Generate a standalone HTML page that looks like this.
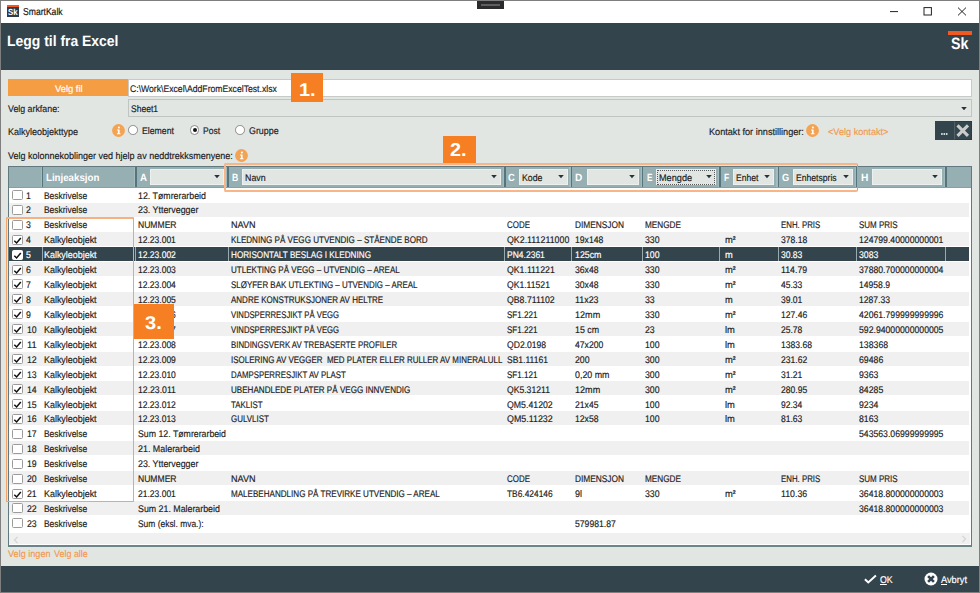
<!DOCTYPE html>
<html><head><meta charset="utf-8"><title>SmartKalk</title>
<style>
*{box-sizing:border-box;margin:0;padding:0}
html,body{width:980px;height:593px;overflow:hidden;background:#e1e6e3}
body{font-family:"Liberation Sans",sans-serif;font-size:9.6px;color:#1c1c1c;position:relative}
.b{position:absolute;display:block}
.t{text-rendering:geometricPrecision;-webkit-text-stroke:0.17px currentColor;position:absolute;display:block;white-space:pre;line-height:12px;transform-origin:0 50%}
.t sup{font-size:0.55em;vertical-align:baseline;position:relative;top:-0.62em;line-height:0;font-weight:bold}
#win{position:absolute;left:0;top:0;width:980px;height:593px;border:1px solid #7f7f7f}
.radio{position:absolute;width:9.6px;height:9.6px;border-radius:50%;border:1.1px solid #8a8a8a;background:#fff}
.radio.on::after{content:"";position:absolute;left:1.7px;top:1.8px;width:4px;height:4px;border-radius:50%;background:#151515}

</style></head>
<body>
<div class="b" style="left:1px;top:1px;width:978px;height:22.4px;background:#fff;"></div>
<div class="b" style="left:7px;top:5px;width:12px;height:12px;background:#2e3a50;border-top:2px solid #f05a22"></div>
<span class="t" style="left:8.10px;top:6.00px;font-size:8.8px;transform:scaleX(0.8917);font-weight:bold;-webkit-text-stroke:0;color:#fff;">Sk</span>
<span class="t" style="left:22.60px;top:7.00px;font-size:10.0px;transform:scaleX(0.8585);color:#111;">SmartKalk</span>
<div class="b" style="left:477px;top:1px;width:26.5px;height:8px;background:#2b2b2d;"></div>
<div class="b" style="left:481px;top:3.5px;width:18.5px;height:2.6px;background:#5e5e60;"></div>
<svg class="b" style="left:886px;top:3px" width="86" height="18" viewBox="0 0 86 18"><path d="M4 8.6H12" stroke="#222" stroke-width="1" fill="none"/><rect x="38" y="4.6" width="7.4" height="7.4" stroke="#222" stroke-width="1" fill="none"/><path d="M72 4.6L80 12.4M80 4.6L72 12.4" stroke="#222" stroke-width="1" fill="none"/></svg>
<div class="b" style="left:1px;top:23.4px;width:978px;height:47px;background:#33444d;"></div>
<span class="t" style="left:6.80px;top:36.00px;font-size:15px;transform:scaleX(0.9288);font-weight:bold;-webkit-text-stroke:0;color:#fff;">Legg til fra Excel</span>
<div class="b" style="left:947.5px;top:30.6px;width:24px;height:4.2px;background:#f05a22;"></div>
<span class="t" style="left:951.00px;top:38.00px;font-size:16.4px;transform:scaleX(0.8673);font-weight:bold;-webkit-text-stroke:0;color:#fff;">Sk</span>
<div class="b" style="left:8px;top:79.2px;width:120.2px;height:17.3px;background:#f59d42;"></div>
<span class="t" style="left:54.50px;top:84.00px;font-size:9.6px;transform:scaleX(0.9765);color:#fff;">Velg fil</span>
<div class="b" style="left:128.2px;top:79.2px;width:843.4px;height:17.7px;background:#fff;border:0.9px solid #c6cbc9"></div>
<span class="t" style="left:129.90px;top:84.00px;font-size:9.6px;transform:scaleX(0.9009);">C:\Work\Excel\AddFromExcelTest.xlsx</span>
<span class="t" style="left:8.00px;top:104.00px;font-size:9.6px;transform:scaleX(0.9193);">Velg arkfane:</span>
<div class="b" style="left:128.2px;top:99.3px;width:843.4px;height:18.1px;background:#e1e6e3;border:1px solid #bfc5c3"></div>
<span class="t" style="left:131.40px;top:104.00px;font-size:9.6px;transform:scaleX(0.8914);">Sheet1</span>
<svg class="b" style="left:961.3px;top:106.7px" width="6" height="3.4" viewBox="0 0 6 3.4"><path d="M0.2 0.1H5.8L3 3.3Z" fill="#25333b"/></svg>
<div class="b" style="left:290.7px;top:73.4px;width:32.5px;height:28.6px;background:#f57f22;"></div>
<span class="t" style="left:298.60px;top:84.00px;font-size:18.6px;transform:scaleX(1.0699);font-weight:bold;-webkit-text-stroke:0;color:#fff;">1.</span>
<span class="t" style="left:8.00px;top:127.00px;font-size:9.6px;transform:scaleX(0.9371);">Kalkyleobjekttype</span>
<div class="b" style="left:112.1px;top:124.0px;width:13px;height:13px"><svg viewBox="0 0 13 13"><circle cx="6.5" cy="6.5" r="6.4" fill="#f2a354"/><circle cx="6.9" cy="3.5" r="1.05" fill="#fff"/><path d="M5.1 5.6H7.6V9.3H8.5V10.3H4.9V9.3H5.9V6.5H5.1Z" fill="#fff"/></svg></div>
<div class="radio" style="left:128.35px;top:125.10000000000001px"></div>
<span class="t" style="left:142.30px;top:126.00px;font-size:9.6px;transform:scaleX(0.9080);">Element</span>
<div class="radio on" style="left:189.89999999999998px;top:125.10000000000001px"></div>
<span class="t" style="left:203.40px;top:126.00px;font-size:9.6px;transform:scaleX(0.8916);">Post</span>
<div class="radio" style="left:235.2px;top:125.10000000000001px"></div>
<span class="t" style="left:249.00px;top:126.00px;font-size:9.6px;transform:scaleX(0.9253);">Gruppe</span>
<span class="t" style="left:708.80px;top:127.00px;font-size:9.6px;transform:scaleX(0.9518);">Kontakt for innstillinger:</span>
<div class="b" style="left:806.3px;top:124.1px;width:13px;height:13px"><svg viewBox="0 0 13 13"><circle cx="6.5" cy="6.5" r="6.4" fill="#f2a354"/><circle cx="6.9" cy="3.5" r="1.05" fill="#fff"/><path d="M5.1 5.6H7.6V9.3H8.5V10.3H4.9V9.3H5.9V6.5H5.1Z" fill="#fff"/></svg></div>
<span class="t" style="left:827.90px;top:127.00px;font-size:9.6px;transform:scaleX(0.9514);color:#f39a4d;">&lt;Velg kontakt&gt;</span>
<div class="b" style="left:935.4px;top:121.3px;width:18.6px;height:18.3px;background:#33444d;"></div>
<svg class="b" style="left:940px;top:132px" width="9" height="4" viewBox="0 0 9 4"><path d="M1.1 1.1h1.6v1.8h-1.6zM3.5 1.1h1.6v1.8h-1.6zM5.9 1.1h1.6v1.8h-1.6z" fill="#c9d8d8"/></svg>
<div class="b" style="left:953.7px;top:121.3px;width:18.0px;height:18.3px;background:#34464e;border:1px solid #2c3b43;border-left-color:#4f6068"></div>
<svg class="b" style="left:955px;top:123px" width="16" height="16" viewBox="0 0 16 16"><path d="M2.5 2.4L13.0 12.9M13.0 2.4L2.5 12.9" stroke="#cbcbcb" stroke-width="3.1" fill="none"/></svg>
<span class="t" style="left:8.00px;top:151.00px;font-size:9.6px;transform:scaleX(0.9383);">Velg kolonnekoblinger ved hjelp av neddtrekksmenyene:</span>
<div class="b" style="left:234.8px;top:148.9px;width:13px;height:13px"><svg viewBox="0 0 13 13"><circle cx="6.5" cy="6.5" r="6.4" fill="#f2a354"/><circle cx="6.9" cy="3.5" r="1.05" fill="#fff"/><path d="M5.1 5.6H7.6V9.3H8.5V10.3H4.9V9.3H5.9V6.5H5.1Z" fill="#fff"/></svg></div>
<div class="b" style="left:442.5px;top:136px;width:33px;height:28px;background:#f57f22;"></div>
<span class="t" style="left:450.00px;top:144.00px;font-size:18.6px;transform:scaleX(1.0699);font-weight:bold;-webkit-text-stroke:0;color:#fff;">2.</span>
<div class="b" style="left:7.7px;top:165.7px;width:964.4px;height:381.3px;background:#fff;border:1.3px solid #61797f;border-bottom:2px solid #6d8489"></div>
<div class="b" style="left:9px;top:167px;width:961.5px;height:20.7px;background:#95afb3;border-bottom:1px solid #86a0a4"></div>
<div class="b" style="left:40.7px;top:167px;width:1.3px;height:19.6px;background:#a3bbbe;"></div>
<div class="b" style="left:42.0px;top:167px;width:1.4px;height:19.6px;background:#56747b;"></div>
<div class="b" style="left:134.0px;top:167px;width:1.3px;height:19.6px;background:#a3bbbe;"></div>
<div class="b" style="left:135.3px;top:167px;width:1.4px;height:19.6px;background:#56747b;"></div>
<div class="b" style="left:226.15px;top:167px;width:1.3px;height:19.6px;background:#a3bbbe;"></div>
<div class="b" style="left:227.45000000000002px;top:167px;width:1.4px;height:19.6px;background:#56747b;"></div>
<div class="b" style="left:502.95px;top:167px;width:1.3px;height:19.6px;background:#a3bbbe;"></div>
<div class="b" style="left:504.25px;top:167px;width:1.4px;height:19.6px;background:#56747b;"></div>
<div class="b" style="left:569.4px;top:167px;width:1.3px;height:19.6px;background:#a3bbbe;"></div>
<div class="b" style="left:570.6999999999999px;top:167px;width:1.4px;height:19.6px;background:#56747b;"></div>
<div class="b" style="left:640.55px;top:167px;width:1.3px;height:19.6px;background:#a3bbbe;"></div>
<div class="b" style="left:641.8499999999999px;top:167px;width:1.4px;height:19.6px;background:#56747b;"></div>
<div class="b" style="left:717.9px;top:167px;width:1.3px;height:19.6px;background:#a3bbbe;"></div>
<div class="b" style="left:719.1999999999999px;top:167px;width:1.4px;height:19.6px;background:#56747b;"></div>
<div class="b" style="left:776.4px;top:167px;width:1.3px;height:19.6px;background:#a3bbbe;"></div>
<div class="b" style="left:777.6999999999999px;top:167px;width:1.4px;height:19.6px;background:#56747b;"></div>
<div class="b" style="left:854.5px;top:167px;width:1.3px;height:19.6px;background:#a3bbbe;"></div>
<div class="b" style="left:855.8px;top:167px;width:1.4px;height:19.6px;background:#56747b;"></div>
<div class="b" style="left:944.0px;top:167px;width:1.3px;height:19.6px;background:#a3bbbe;"></div>
<div class="b" style="left:945.3px;top:167px;width:1.4px;height:19.6px;background:#56747b;"></div>
<span class="t" style="left:45.60px;top:173.00px;font-size:10.4px;transform:scaleX(0.9323);font-weight:bold;-webkit-text-stroke:0;color:#fff;">Linjeaksjon</span>
<span class="t" style="left:139.50px;top:173.00px;font-size:10.4px;transform:scaleX(0.9314);font-weight:bold;-webkit-text-stroke:0;color:#fff;">A</span>
<div class="b" style="left:150px;top:168.6px;width:73.8px;height:16.9px;background:#e1e6e3;border:1px solid #ecf0ee"></div>
<svg class="b" style="left:214.1px;top:175.45000000000002px" width="6" height="3.4" viewBox="0 0 6 3.4"><path d="M0.2 0.1H5.8L3 3.3Z" fill="#25333b"/></svg>
<span class="t" style="left:231.85px;top:173.00px;font-size:10.4px;transform:scaleX(0.8383);font-weight:bold;-webkit-text-stroke:0;color:#fff;">B</span>
<div class="b" style="left:242.4px;top:168.6px;width:258.7px;height:16.9px;background:#e1e6e3;border:1px solid #ecf0ee"></div>
<span class="t" style="left:245.30px;top:173.00px;font-size:9.6px;transform:scaleX(0.9206);">Navn</span>
<svg class="b" style="left:491.1px;top:175.45000000000002px" width="6" height="3.4" viewBox="0 0 6 3.4"><path d="M0.2 0.1H5.8L3 3.3Z" fill="#25333b"/></svg>
<span class="t" style="left:508.05px;top:173.00px;font-size:10.4px;transform:scaleX(0.8915);font-weight:bold;-webkit-text-stroke:0;color:#fff;">C</span>
<div class="b" style="left:519.1px;top:168.6px;width:48.6px;height:16.9px;background:#e1e6e3;border:1px solid #ecf0ee"></div>
<span class="t" style="left:522.00px;top:173.00px;font-size:9.6px;transform:scaleX(0.9118);">Kode</span>
<svg class="b" style="left:557.6px;top:175.45000000000002px" width="6" height="3.4" viewBox="0 0 6 3.4"><path d="M0.2 0.1H5.8L3 3.3Z" fill="#25333b"/></svg>
<span class="t" style="left:575.25px;top:173.00px;font-size:10.4px;transform:scaleX(0.9713);font-weight:bold;-webkit-text-stroke:0;color:#fff;">D</span>
<div class="b" style="left:586.7px;top:168.6px;width:52.2px;height:16.9px;background:#e1e6e3;border:1px solid #ecf0ee"></div>
<svg class="b" style="left:628.8px;top:175.45000000000002px" width="6" height="3.4" viewBox="0 0 6 3.4"><path d="M0.2 0.1H5.8L3 3.3Z" fill="#25333b"/></svg>
<span class="t" style="left:646.65px;top:173.00px;font-size:10.4px;transform:scaleX(0.7928);font-weight:bold;-webkit-text-stroke:0;color:#fff;">E</span>
<div class="b" style="left:656.2px;top:168.6px;width:59.7px;height:16.9px;background:#e1e6e3;border:1px solid #ecf0ee"></div>
<div class="b" style="left:657.4000000000001px;top:170.0px;width:57.3px;height:14.6px;border:1px dotted #5a5a5a"></div>
<span class="t" style="left:659.10px;top:173.00px;font-size:9.6px;transform:scaleX(0.9536);">Mengde</span>
<svg class="b" style="left:706.0px;top:175.45000000000002px" width="6" height="3.4" viewBox="0 0 6 3.4"><path d="M0.2 0.1H5.8L3 3.3Z" fill="#25333b"/></svg>
<span class="t" style="left:723.55px;top:173.00px;font-size:10.4px;transform:scaleX(0.8177);font-weight:bold;-webkit-text-stroke:0;color:#fff;">F</span>
<div class="b" style="left:732.9px;top:168.6px;width:41.5px;height:16.9px;background:#e1e6e3;border:1px solid #ecf0ee"></div>
<span class="t" style="left:735.80px;top:173.00px;font-size:9.6px;transform:scaleX(0.8941);">Enhet</span>
<svg class="b" style="left:764.3px;top:175.45000000000002px" width="6" height="3.4" viewBox="0 0 6 3.4"><path d="M0.2 0.1H5.8L3 3.3Z" fill="#25333b"/></svg>
<span class="t" style="left:781.50px;top:173.00px;font-size:10.4px;transform:scaleX(0.8896);font-weight:bold;-webkit-text-stroke:0;color:#fff;">G</span>
<div class="b" style="left:793.4px;top:168.6px;width:59.6px;height:16.9px;background:#e1e6e3;border:1px solid #ecf0ee"></div>
<span class="t" style="left:796.30px;top:173.00px;font-size:9.6px;transform:scaleX(0.8970);">Enhetspris</span>
<svg class="b" style="left:843.0px;top:175.45000000000002px" width="6" height="3.4" viewBox="0 0 6 3.4"><path d="M0.2 0.1H5.8L3 3.3Z" fill="#25333b"/></svg>
<span class="t" style="left:860.55px;top:173.00px;font-size:10.4px;transform:scaleX(0.9846);font-weight:bold;-webkit-text-stroke:0;color:#fff;">H</span>
<div class="b" style="left:872.1px;top:168.6px;width:70.1px;height:16.9px;background:#e1e6e3;border:1px solid #ecf0ee"></div>
<svg class="b" style="left:932.05px;top:175.45000000000002px" width="6" height="3.4" viewBox="0 0 6 3.4"><path d="M0.2 0.1H5.8L3 3.3Z" fill="#25333b"/></svg>
<div class="b" style="left:12.0px;top:189.9px;width:10.7px;height:10.0px;background:#fff;border:1px solid #9b9b9b;border-radius:1.5px"></div>
<span class="t" style="left:25.70px;top:191.00px;font-size:9.6px;transform:scaleX(0.9079);">1</span>
<span class="t" style="left:44.00px;top:191.00px;font-size:9.6px;transform:scaleX(0.8790);">Beskrivelse</span>
<span class="t" style="left:138.30px;top:191.00px;font-size:9.6px;transform:scaleX(0.9188);">12. Tømrerarbeid</span>
<div class="b" style="left:9px;top:202.56px;width:960px;height:14.0px;background:#f0f0f0;"></div>
<div class="b" style="left:12.0px;top:204.83px;width:10.7px;height:10.0px;background:#fff;border:1px solid #9b9b9b;border-radius:1.5px"></div>
<span class="t" style="left:25.70px;top:205.00px;font-size:9.6px;transform:scaleX(0.9079);">2</span>
<span class="t" style="left:44.00px;top:205.00px;font-size:9.6px;transform:scaleX(0.8790);">Beskrivelse</span>
<span class="t" style="left:138.30px;top:205.00px;font-size:9.6px;transform:scaleX(0.9231);">23. Yttervegger</span>
<div class="b" style="left:12.0px;top:219.76px;width:10.7px;height:10.0px;background:#fff;border:1px solid #9b9b9b;border-radius:1.5px"></div>
<span class="t" style="left:25.70px;top:220.00px;font-size:9.6px;transform:scaleX(0.9079);">3</span>
<span class="t" style="left:44.00px;top:220.00px;font-size:9.6px;transform:scaleX(0.8790);">Beskrivelse</span>
<span class="t" style="left:138.30px;top:220.00px;font-size:9.6px;transform:scaleX(0.8930);">NUMMER</span>
<span class="t" style="left:230.60px;top:220.00px;font-size:9.6px;transform:scaleX(0.9467);">NAVN</span>
<span class="t" style="left:507.30px;top:220.00px;font-size:9.6px;transform:scaleX(0.8277);">CODE</span>
<span class="t" style="left:574.50px;top:220.00px;font-size:9.6px;transform:scaleX(0.8670);">DIMENSJON</span>
<span class="t" style="left:645.40px;top:220.00px;font-size:9.6px;transform:scaleX(0.8543);">MENGDE</span>
<span class="t" style="left:781.20px;top:220.00px;font-size:9.6px;transform:scaleX(0.8184);">ENH. PRIS</span>
<span class="t" style="left:859.40px;top:220.00px;font-size:9.6px;transform:scaleX(0.8335);">SUM PRIS</span>
<div class="b" style="left:9px;top:232.38px;width:960px;height:14.0px;background:#f0f0f0;"></div>
<div class="b" style="left:12.0px;top:234.69px;width:10.7px;height:10.0px;background:#fff;border:1px solid #9b9b9b;border-radius:1.5px"><svg style="position:absolute;left:-1px;top:-1px" width="11" height="11" viewBox="0 0 11 11"><path d="M2.3 5.7L4.6 8L8.8 2.9" fill="none" stroke="#111" stroke-width="1.5"/></svg></div>
<span class="t" style="left:25.70px;top:235.00px;font-size:9.6px;transform:scaleX(0.9079);">4</span>
<span class="t" style="left:44.00px;top:235.00px;font-size:9.6px;transform:scaleX(0.9303);">Kalkyleobjekt</span>
<span class="t" style="left:138.30px;top:235.00px;font-size:9.6px;transform:scaleX(0.8870);">12.23.001</span>
<span class="t" style="left:230.60px;top:235.00px;font-size:9.6px;transform:scaleX(0.8421);">KLEDNING PÅ VEGG UTVENDIG – STÅENDE BORD</span>
<span class="t" style="left:507.30px;top:235.00px;font-size:9.6px;transform:scaleX(0.9200);">QK2.111211000</span>
<span class="t" style="left:574.50px;top:235.00px;font-size:9.6px;transform:scaleX(0.9017);">19x148</span>
<span class="t" style="left:645.40px;top:235.00px;font-size:9.6px;transform:scaleX(0.9088);">330</span>
<span class="t" style="left:724.60px;top:235.00px;font-size:9.6px;transform:scaleX(0.9781);">m<sup>2</sup></span>
<span class="t" style="left:781.20px;top:235.00px;font-size:9.6px;transform:scaleX(0.8932);">378.18</span>
<span class="t" style="left:859.40px;top:235.00px;font-size:9.6px;transform:scaleX(0.9042);">124799.40000000001</span>
<div class="b" style="left:9px;top:247.44000000000003px;width:960px;height:13.35px;background:#33444d;"></div>
<div class="b" style="left:42.1px;top:247.44000000000003px;width:1.1px;height:13.35px;background:#9aabaf;"></div>
<div class="b" style="left:135.4px;top:247.44000000000003px;width:1.1px;height:13.35px;background:#9aabaf;"></div>
<div class="b" style="left:227.55px;top:247.44000000000003px;width:1.1px;height:13.35px;background:#9aabaf;"></div>
<div class="b" style="left:504.34999999999997px;top:247.44000000000003px;width:1.1px;height:13.35px;background:#9aabaf;"></div>
<div class="b" style="left:570.8px;top:247.44000000000003px;width:1.1px;height:13.35px;background:#9aabaf;"></div>
<div class="b" style="left:641.9499999999999px;top:247.44000000000003px;width:1.1px;height:13.35px;background:#9aabaf;"></div>
<div class="b" style="left:719.3px;top:247.44000000000003px;width:1.1px;height:13.35px;background:#9aabaf;"></div>
<div class="b" style="left:777.8px;top:247.44000000000003px;width:1.1px;height:13.35px;background:#9aabaf;"></div>
<div class="b" style="left:855.9px;top:247.44000000000003px;width:1.1px;height:13.35px;background:#9aabaf;"></div>
<div class="b" style="left:945.4px;top:247.44000000000003px;width:1.1px;height:13.35px;background:#9aabaf;"></div>
<div class="b" style="left:12.0px;top:249.62px;width:10.7px;height:10.0px;background:#fff;border:1px solid #fff;border-radius:1.5px"><svg style="position:absolute;left:-1px;top:-1px" width="11" height="11" viewBox="0 0 11 11"><path d="M2.3 5.7L4.6 8L8.8 2.9" fill="none" stroke="#111" stroke-width="1.5"/></svg></div>
<span class="t" style="left:25.70px;top:250.00px;font-size:9.6px;transform:scaleX(0.9079);color:#fff;">5</span>
<span class="t" style="left:44.00px;top:250.00px;font-size:9.6px;transform:scaleX(0.9303);color:#fff;">Kalkyleobjekt</span>
<span class="t" style="left:138.30px;top:250.00px;font-size:9.6px;transform:scaleX(0.8870);color:#fff;">12.23.002</span>
<span class="t" style="left:230.60px;top:250.00px;font-size:9.6px;transform:scaleX(0.8498);color:#fff;">HORISONTALT BESLAG I KLEDNING</span>
<span class="t" style="left:507.30px;top:250.00px;font-size:9.6px;transform:scaleX(0.8868);color:#fff;">PN4.2361</span>
<span class="t" style="left:574.50px;top:250.00px;font-size:9.6px;transform:scaleX(0.9185);color:#fff;">125cm</span>
<span class="t" style="left:645.40px;top:250.00px;font-size:9.6px;transform:scaleX(0.9088);color:#fff;">100</span>
<span class="t" style="left:724.60px;top:250.00px;font-size:9.6px;transform:scaleX(0.9673);color:#fff;">m</span>
<span class="t" style="left:781.20px;top:250.00px;font-size:9.6px;transform:scaleX(0.8893);color:#fff;">30.83</span>
<span class="t" style="left:859.40px;top:250.00px;font-size:9.6px;transform:scaleX(0.9092);color:#fff;">3083</span>
<div class="b" style="left:9px;top:262.2px;width:960px;height:14.0px;background:#f0f0f0;"></div>
<div class="b" style="left:12.0px;top:264.55px;width:10.7px;height:10.0px;background:#fff;border:1px solid #9b9b9b;border-radius:1.5px"><svg style="position:absolute;left:-1px;top:-1px" width="11" height="11" viewBox="0 0 11 11"><path d="M2.3 5.7L4.6 8L8.8 2.9" fill="none" stroke="#111" stroke-width="1.5"/></svg></div>
<span class="t" style="left:25.70px;top:265.00px;font-size:9.6px;transform:scaleX(0.9079);">6</span>
<span class="t" style="left:44.00px;top:265.00px;font-size:9.6px;transform:scaleX(0.9303);">Kalkyleobjekt</span>
<span class="t" style="left:138.30px;top:265.00px;font-size:9.6px;transform:scaleX(0.8870);">12.23.003</span>
<span class="t" style="left:230.60px;top:265.00px;font-size:9.6px;transform:scaleX(0.8376);">UTLEKTING PÅ VEGG – UTVENDIG – AREAL</span>
<span class="t" style="left:507.30px;top:265.00px;font-size:9.6px;transform:scaleX(0.9108);">QK1.111221</span>
<span class="t" style="left:574.50px;top:265.00px;font-size:9.6px;transform:scaleX(0.9004);">36x48</span>
<span class="t" style="left:645.40px;top:265.00px;font-size:9.6px;transform:scaleX(0.9088);">330</span>
<span class="t" style="left:724.60px;top:265.00px;font-size:9.6px;transform:scaleX(0.9781);">m<sup>2</sup></span>
<span class="t" style="left:781.20px;top:265.00px;font-size:9.6px;transform:scaleX(0.9151);">114.79</span>
<span class="t" style="left:859.40px;top:265.00px;font-size:9.6px;transform:scaleX(0.9042);">37880.700000000004</span>
<div class="b" style="left:12.0px;top:279.48px;width:10.7px;height:10.0px;background:#fff;border:1px solid #9b9b9b;border-radius:1.5px"><svg style="position:absolute;left:-1px;top:-1px" width="11" height="11" viewBox="0 0 11 11"><path d="M2.3 5.7L4.6 8L8.8 2.9" fill="none" stroke="#111" stroke-width="1.5"/></svg></div>
<span class="t" style="left:25.70px;top:280.00px;font-size:9.6px;transform:scaleX(0.9079);">7</span>
<span class="t" style="left:44.00px;top:280.00px;font-size:9.6px;transform:scaleX(0.9303);">Kalkyleobjekt</span>
<span class="t" style="left:138.30px;top:280.00px;font-size:9.6px;transform:scaleX(0.8870);">12.23.004</span>
<span class="t" style="left:230.60px;top:280.00px;font-size:9.6px;transform:scaleX(0.8290);">SLØYFER BAK UTLEKTING – UTVENDIG – AREAL</span>
<span class="t" style="left:507.30px;top:280.00px;font-size:9.6px;transform:scaleX(0.8974);">QK1.11521</span>
<span class="t" style="left:574.50px;top:280.00px;font-size:9.6px;transform:scaleX(0.9004);">30x48</span>
<span class="t" style="left:645.40px;top:280.00px;font-size:9.6px;transform:scaleX(0.9088);">330</span>
<span class="t" style="left:724.60px;top:280.00px;font-size:9.6px;transform:scaleX(0.9781);">m<sup>2</sup></span>
<span class="t" style="left:781.20px;top:280.00px;font-size:9.6px;transform:scaleX(0.8893);">45.33</span>
<span class="t" style="left:859.40px;top:280.00px;font-size:9.6px;transform:scaleX(0.8954);">14958.9</span>
<div class="b" style="left:9px;top:292.02px;width:960px;height:14.0px;background:#f0f0f0;"></div>
<div class="b" style="left:12.0px;top:294.40999999999997px;width:10.7px;height:10.0px;background:#fff;border:1px solid #9b9b9b;border-radius:1.5px"><svg style="position:absolute;left:-1px;top:-1px" width="11" height="11" viewBox="0 0 11 11"><path d="M2.3 5.7L4.6 8L8.8 2.9" fill="none" stroke="#111" stroke-width="1.5"/></svg></div>
<span class="t" style="left:25.70px;top:295.00px;font-size:9.6px;transform:scaleX(0.9079);">8</span>
<span class="t" style="left:44.00px;top:295.00px;font-size:9.6px;transform:scaleX(0.9303);">Kalkyleobjekt</span>
<span class="t" style="left:138.30px;top:295.00px;font-size:9.6px;transform:scaleX(0.8870);">12.23.005</span>
<span class="t" style="left:230.60px;top:295.00px;font-size:9.6px;transform:scaleX(0.8336);">ANDRE KONSTRUKSJONER AV HELTRE</span>
<span class="t" style="left:507.30px;top:295.00px;font-size:9.6px;transform:scaleX(0.9096);">QB8.711102</span>
<span class="t" style="left:574.50px;top:295.00px;font-size:9.6px;transform:scaleX(0.9253);">11x23</span>
<span class="t" style="left:645.40px;top:295.00px;font-size:9.6px;transform:scaleX(0.9092);">33</span>
<span class="t" style="left:724.60px;top:295.00px;font-size:9.6px;transform:scaleX(0.9673);">m</span>
<span class="t" style="left:781.20px;top:295.00px;font-size:9.6px;transform:scaleX(0.8893);">39.01</span>
<span class="t" style="left:859.40px;top:295.00px;font-size:9.6px;transform:scaleX(0.8954);">1287.33</span>
<div class="b" style="left:12.0px;top:309.34000000000003px;width:10.7px;height:10.0px;background:#fff;border:1px solid #9b9b9b;border-radius:1.5px"><svg style="position:absolute;left:-1px;top:-1px" width="11" height="11" viewBox="0 0 11 11"><path d="M2.3 5.7L4.6 8L8.8 2.9" fill="none" stroke="#111" stroke-width="1.5"/></svg></div>
<span class="t" style="left:25.70px;top:310.00px;font-size:9.6px;transform:scaleX(0.9079);">9</span>
<span class="t" style="left:44.00px;top:310.00px;font-size:9.6px;transform:scaleX(0.9303);">Kalkyleobjekt</span>
<span class="t" style="left:138.30px;top:310.00px;font-size:9.6px;transform:scaleX(0.8870);">12.23.006</span>
<span class="t" style="left:230.60px;top:310.00px;font-size:9.6px;transform:scaleX(0.8057);">VINDSPERRESJIKT PÅ VEGG</span>
<span class="t" style="left:507.30px;top:310.00px;font-size:9.6px;transform:scaleX(0.8384);">SF1.221</span>
<span class="t" style="left:574.50px;top:310.00px;font-size:9.6px;transform:scaleX(0.9446);">12mm</span>
<span class="t" style="left:645.40px;top:310.00px;font-size:9.6px;transform:scaleX(0.9088);">330</span>
<span class="t" style="left:724.60px;top:310.00px;font-size:9.6px;transform:scaleX(0.9781);">m<sup>2</sup></span>
<span class="t" style="left:781.20px;top:310.00px;font-size:9.6px;transform:scaleX(0.8932);">127.46</span>
<span class="t" style="left:859.40px;top:310.00px;font-size:9.6px;transform:scaleX(0.9042);">42061.799999999996</span>
<div class="b" style="left:9px;top:321.84000000000003px;width:960px;height:14.0px;background:#f0f0f0;"></div>
<div class="b" style="left:12.0px;top:324.27px;width:10.7px;height:10.0px;background:#fff;border:1px solid #9b9b9b;border-radius:1.5px"><svg style="position:absolute;left:-1px;top:-1px" width="11" height="11" viewBox="0 0 11 11"><path d="M2.3 5.7L4.6 8L8.8 2.9" fill="none" stroke="#111" stroke-width="1.5"/></svg></div>
<span class="t" style="left:26.60px;top:325.00px;font-size:9.6px;transform:scaleX(0.9092);">10</span>
<span class="t" style="left:44.00px;top:325.00px;font-size:9.6px;transform:scaleX(0.9303);">Kalkyleobjekt</span>
<span class="t" style="left:138.30px;top:325.00px;font-size:9.6px;transform:scaleX(0.8870);">12.23.007</span>
<span class="t" style="left:230.60px;top:325.00px;font-size:9.6px;transform:scaleX(0.8057);">VINDSPERRESJIKT PÅ VEGG</span>
<span class="t" style="left:507.30px;top:325.00px;font-size:9.6px;transform:scaleX(0.8384);">SF1.221</span>
<span class="t" style="left:574.50px;top:325.00px;font-size:9.6px;transform:scaleX(0.9206);">15 cm</span>
<span class="t" style="left:645.40px;top:325.00px;font-size:9.6px;transform:scaleX(0.9092);">23</span>
<span class="t" style="left:724.60px;top:325.00px;font-size:9.6px;transform:scaleX(0.9796);">lm</span>
<span class="t" style="left:781.20px;top:325.00px;font-size:9.6px;transform:scaleX(0.8893);">25.78</span>
<span class="t" style="left:859.40px;top:325.00px;font-size:9.6px;transform:scaleX(0.9042);">592.94000000000005</span>
<div class="b" style="left:12.0px;top:339.20000000000005px;width:10.7px;height:10.0px;background:#fff;border:1px solid #9b9b9b;border-radius:1.5px"><svg style="position:absolute;left:-1px;top:-1px" width="11" height="11" viewBox="0 0 11 11"><path d="M2.3 5.7L4.6 8L8.8 2.9" fill="none" stroke="#111" stroke-width="1.5"/></svg></div>
<span class="t" style="left:26.60px;top:340.00px;font-size:9.6px;transform:scaleX(0.9734);">11</span>
<span class="t" style="left:44.00px;top:340.00px;font-size:9.6px;transform:scaleX(0.9303);">Kalkyleobjekt</span>
<span class="t" style="left:138.30px;top:340.00px;font-size:9.6px;transform:scaleX(0.8870);">12.23.008</span>
<span class="t" style="left:230.60px;top:340.00px;font-size:9.6px;transform:scaleX(0.8156);">BINDINGSVERK AV TREBASERTE PROFILER</span>
<span class="t" style="left:507.30px;top:340.00px;font-size:9.6px;transform:scaleX(0.8951);">QD2.0198</span>
<span class="t" style="left:574.50px;top:340.00px;font-size:9.6px;transform:scaleX(0.9017);">47x200</span>
<span class="t" style="left:645.40px;top:340.00px;font-size:9.6px;transform:scaleX(0.9088);">100</span>
<span class="t" style="left:724.60px;top:340.00px;font-size:9.6px;transform:scaleX(0.9796);">lm</span>
<span class="t" style="left:781.20px;top:340.00px;font-size:9.6px;transform:scaleX(0.8954);">1383.68</span>
<span class="t" style="left:859.40px;top:340.00px;font-size:9.6px;transform:scaleX(0.9092);">138368</span>
<div class="b" style="left:9px;top:351.65999999999997px;width:960px;height:14.0px;background:#f0f0f0;"></div>
<div class="b" style="left:12.0px;top:354.13px;width:10.7px;height:10.0px;background:#fff;border:1px solid #9b9b9b;border-radius:1.5px"><svg style="position:absolute;left:-1px;top:-1px" width="11" height="11" viewBox="0 0 11 11"><path d="M2.3 5.7L4.6 8L8.8 2.9" fill="none" stroke="#111" stroke-width="1.5"/></svg></div>
<span class="t" style="left:26.60px;top:355.00px;font-size:9.6px;transform:scaleX(0.9092);">12</span>
<span class="t" style="left:44.00px;top:355.00px;font-size:9.6px;transform:scaleX(0.9303);">Kalkyleobjekt</span>
<span class="t" style="left:138.30px;top:355.00px;font-size:9.6px;transform:scaleX(0.8870);">12.23.009</span>
<span class="t" style="left:230.60px;top:355.00px;font-size:9.6px;transform:scaleX(0.8304);">ISOLERING AV VEGGER&nbsp; MED PLATER ELLER RULLER AV MINERALULL</span>
<span class="t" style="left:507.30px;top:355.00px;font-size:9.6px;transform:scaleX(0.8874);">SB1.11161</span>
<span class="t" style="left:574.50px;top:355.00px;font-size:9.6px;transform:scaleX(0.9088);">200</span>
<span class="t" style="left:645.40px;top:355.00px;font-size:9.6px;transform:scaleX(0.9088);">300</span>
<span class="t" style="left:724.60px;top:355.00px;font-size:9.6px;transform:scaleX(0.9781);">m<sup>2</sup></span>
<span class="t" style="left:781.20px;top:355.00px;font-size:9.6px;transform:scaleX(0.8932);">231.62</span>
<span class="t" style="left:859.40px;top:355.00px;font-size:9.6px;transform:scaleX(0.9090);">69486</span>
<div class="b" style="left:12.0px;top:369.06px;width:10.7px;height:10.0px;background:#fff;border:1px solid #9b9b9b;border-radius:1.5px"><svg style="position:absolute;left:-1px;top:-1px" width="11" height="11" viewBox="0 0 11 11"><path d="M2.3 5.7L4.6 8L8.8 2.9" fill="none" stroke="#111" stroke-width="1.5"/></svg></div>
<span class="t" style="left:26.60px;top:370.00px;font-size:9.6px;transform:scaleX(0.9092);">13</span>
<span class="t" style="left:44.00px;top:370.00px;font-size:9.6px;transform:scaleX(0.9303);">Kalkyleobjekt</span>
<span class="t" style="left:138.30px;top:370.00px;font-size:9.6px;transform:scaleX(0.8870);">12.23.010</span>
<span class="t" style="left:230.60px;top:370.00px;font-size:9.6px;transform:scaleX(0.8179);">DAMPSPERRESJIKT AV PLAST</span>
<span class="t" style="left:507.30px;top:370.00px;font-size:9.6px;transform:scaleX(0.8384);">SF1.121</span>
<span class="t" style="left:574.50px;top:370.00px;font-size:9.6px;transform:scaleX(0.9229);">0,20 mm</span>
<span class="t" style="left:645.40px;top:370.00px;font-size:9.6px;transform:scaleX(0.9088);">300</span>
<span class="t" style="left:724.60px;top:370.00px;font-size:9.6px;transform:scaleX(0.9781);">m<sup>2</sup></span>
<span class="t" style="left:781.20px;top:370.00px;font-size:9.6px;transform:scaleX(0.8893);">31.21</span>
<span class="t" style="left:859.40px;top:370.00px;font-size:9.6px;transform:scaleX(0.9092);">9363</span>
<div class="b" style="left:9px;top:381.48px;width:960px;height:14.0px;background:#f0f0f0;"></div>
<div class="b" style="left:12.0px;top:383.99px;width:10.7px;height:10.0px;background:#fff;border:1px solid #9b9b9b;border-radius:1.5px"><svg style="position:absolute;left:-1px;top:-1px" width="11" height="11" viewBox="0 0 11 11"><path d="M2.3 5.7L4.6 8L8.8 2.9" fill="none" stroke="#111" stroke-width="1.5"/></svg></div>
<span class="t" style="left:26.60px;top:385.00px;font-size:9.6px;transform:scaleX(0.9092);">14</span>
<span class="t" style="left:44.00px;top:385.00px;font-size:9.6px;transform:scaleX(0.9303);">Kalkyleobjekt</span>
<span class="t" style="left:138.30px;top:385.00px;font-size:9.6px;transform:scaleX(0.9022);">12.23.011</span>
<span class="t" style="left:230.60px;top:385.00px;font-size:9.6px;transform:scaleX(0.8416);">UBEHANDLEDE PLATER PÅ VEGG INNVENDIG</span>
<span class="t" style="left:507.30px;top:385.00px;font-size:9.6px;transform:scaleX(0.8974);">QK5.31211</span>
<span class="t" style="left:574.50px;top:385.00px;font-size:9.6px;transform:scaleX(0.9446);">12mm</span>
<span class="t" style="left:645.40px;top:385.00px;font-size:9.6px;transform:scaleX(0.9088);">300</span>
<span class="t" style="left:724.60px;top:385.00px;font-size:9.6px;transform:scaleX(0.9781);">m<sup>2</sup></span>
<span class="t" style="left:781.20px;top:385.00px;font-size:9.6px;transform:scaleX(0.8932);">280.95</span>
<span class="t" style="left:859.40px;top:385.00px;font-size:9.6px;transform:scaleX(0.9090);">84285</span>
<div class="b" style="left:12.0px;top:398.91999999999996px;width:10.7px;height:10.0px;background:#fff;border:1px solid #9b9b9b;border-radius:1.5px"><svg style="position:absolute;left:-1px;top:-1px" width="11" height="11" viewBox="0 0 11 11"><path d="M2.3 5.7L4.6 8L8.8 2.9" fill="none" stroke="#111" stroke-width="1.5"/></svg></div>
<span class="t" style="left:26.60px;top:400.00px;font-size:9.6px;transform:scaleX(0.9092);">15</span>
<span class="t" style="left:44.00px;top:400.00px;font-size:9.6px;transform:scaleX(0.9303);">Kalkyleobjekt</span>
<span class="t" style="left:138.30px;top:400.00px;font-size:9.6px;transform:scaleX(0.8870);">12.23.012</span>
<span class="t" style="left:230.60px;top:400.00px;font-size:9.6px;transform:scaleX(0.8239);">TAKLIST</span>
<span class="t" style="left:507.30px;top:400.00px;font-size:9.6px;transform:scaleX(0.9124);">QM5.41202</span>
<span class="t" style="left:574.50px;top:400.00px;font-size:9.6px;transform:scaleX(0.9004);">21x45</span>
<span class="t" style="left:645.40px;top:400.00px;font-size:9.6px;transform:scaleX(0.9088);">100</span>
<span class="t" style="left:724.60px;top:400.00px;font-size:9.6px;transform:scaleX(0.9796);">lm</span>
<span class="t" style="left:781.20px;top:400.00px;font-size:9.6px;transform:scaleX(0.8893);">92.34</span>
<span class="t" style="left:859.40px;top:400.00px;font-size:9.6px;transform:scaleX(0.9092);">9234</span>
<div class="b" style="left:9px;top:411.3px;width:960px;height:14.0px;background:#f0f0f0;"></div>
<div class="b" style="left:12.0px;top:413.85px;width:10.7px;height:10.0px;background:#fff;border:1px solid #9b9b9b;border-radius:1.5px"><svg style="position:absolute;left:-1px;top:-1px" width="11" height="11" viewBox="0 0 11 11"><path d="M2.3 5.7L4.6 8L8.8 2.9" fill="none" stroke="#111" stroke-width="1.5"/></svg></div>
<span class="t" style="left:26.60px;top:414.00px;font-size:9.6px;transform:scaleX(0.9092);">16</span>
<span class="t" style="left:44.00px;top:414.00px;font-size:9.6px;transform:scaleX(0.9303);">Kalkyleobjekt</span>
<span class="t" style="left:138.30px;top:414.00px;font-size:9.6px;transform:scaleX(0.8870);">12.23.013</span>
<span class="t" style="left:230.60px;top:414.00px;font-size:9.6px;transform:scaleX(0.8290);">GULVLIST</span>
<span class="t" style="left:507.30px;top:414.00px;font-size:9.6px;transform:scaleX(0.9257);">QM5.11232</span>
<span class="t" style="left:574.50px;top:414.00px;font-size:9.6px;transform:scaleX(0.9004);">12x58</span>
<span class="t" style="left:645.40px;top:414.00px;font-size:9.6px;transform:scaleX(0.9088);">100</span>
<span class="t" style="left:724.60px;top:414.00px;font-size:9.6px;transform:scaleX(0.9796);">lm</span>
<span class="t" style="left:781.20px;top:414.00px;font-size:9.6px;transform:scaleX(0.8893);">81.63</span>
<span class="t" style="left:859.40px;top:414.00px;font-size:9.6px;transform:scaleX(0.9092);">8163</span>
<div class="b" style="left:12.0px;top:428.78px;width:10.7px;height:10.0px;background:#fff;border:1px solid #9b9b9b;border-radius:1.5px"></div>
<span class="t" style="left:26.60px;top:429.00px;font-size:9.6px;transform:scaleX(0.9092);">17</span>
<span class="t" style="left:44.00px;top:429.00px;font-size:9.6px;transform:scaleX(0.8790);">Beskrivelse</span>
<span class="t" style="left:138.30px;top:429.00px;font-size:9.6px;transform:scaleX(0.9129);">Sum 12. Tømrerarbeid</span>
<span class="t" style="left:859.40px;top:429.00px;font-size:9.6px;transform:scaleX(0.9042);">543563.06999999995</span>
<div class="b" style="left:9px;top:441.12px;width:960px;height:14.0px;background:#f0f0f0;"></div>
<div class="b" style="left:12.0px;top:443.71000000000004px;width:10.7px;height:10.0px;background:#fff;border:1px solid #9b9b9b;border-radius:1.5px"></div>
<span class="t" style="left:26.60px;top:444.00px;font-size:9.6px;transform:scaleX(0.9092);">18</span>
<span class="t" style="left:44.00px;top:444.00px;font-size:9.6px;transform:scaleX(0.8790);">Beskrivelse</span>
<span class="t" style="left:138.30px;top:444.00px;font-size:9.6px;transform:scaleX(0.9280);">21. Malerarbeid</span>
<div class="b" style="left:12.0px;top:458.64px;width:10.7px;height:10.0px;background:#fff;border:1px solid #9b9b9b;border-radius:1.5px"></div>
<span class="t" style="left:26.60px;top:459.00px;font-size:9.6px;transform:scaleX(0.9092);">19</span>
<span class="t" style="left:44.00px;top:459.00px;font-size:9.6px;transform:scaleX(0.8790);">Beskrivelse</span>
<span class="t" style="left:138.30px;top:459.00px;font-size:9.6px;transform:scaleX(0.9231);">23. Yttervegger</span>
<div class="b" style="left:9px;top:470.94000000000005px;width:960px;height:14.0px;background:#f0f0f0;"></div>
<div class="b" style="left:12.0px;top:473.57000000000005px;width:10.7px;height:10.0px;background:#fff;border:1px solid #9b9b9b;border-radius:1.5px"></div>
<span class="t" style="left:26.60px;top:474.00px;font-size:9.6px;transform:scaleX(0.9092);">20</span>
<span class="t" style="left:44.00px;top:474.00px;font-size:9.6px;transform:scaleX(0.8790);">Beskrivelse</span>
<span class="t" style="left:138.30px;top:474.00px;font-size:9.6px;transform:scaleX(0.8930);">NUMMER</span>
<span class="t" style="left:230.60px;top:474.00px;font-size:9.6px;transform:scaleX(0.9467);">NAVN</span>
<span class="t" style="left:507.30px;top:474.00px;font-size:9.6px;transform:scaleX(0.8277);">CODE</span>
<span class="t" style="left:574.50px;top:474.00px;font-size:9.6px;transform:scaleX(0.8670);">DIMENSJON</span>
<span class="t" style="left:645.40px;top:474.00px;font-size:9.6px;transform:scaleX(0.8543);">MENGDE</span>
<span class="t" style="left:781.20px;top:474.00px;font-size:9.6px;transform:scaleX(0.8184);">ENH. PRIS</span>
<span class="t" style="left:859.40px;top:474.00px;font-size:9.6px;transform:scaleX(0.8335);">SUM PRIS</span>
<div class="b" style="left:12.0px;top:488.5px;width:10.7px;height:10.0px;background:#fff;border:1px solid #9b9b9b;border-radius:1.5px"><svg style="position:absolute;left:-1px;top:-1px" width="11" height="11" viewBox="0 0 11 11"><path d="M2.3 5.7L4.6 8L8.8 2.9" fill="none" stroke="#111" stroke-width="1.5"/></svg></div>
<span class="t" style="left:26.60px;top:489.00px;font-size:9.6px;transform:scaleX(0.9092);">21</span>
<span class="t" style="left:44.00px;top:489.00px;font-size:9.6px;transform:scaleX(0.9303);">Kalkyleobjekt</span>
<span class="t" style="left:138.30px;top:489.00px;font-size:9.6px;transform:scaleX(0.8870);">21.23.001</span>
<span class="t" style="left:230.60px;top:489.00px;font-size:9.6px;transform:scaleX(0.8410);">MALEBEHANDLING PÅ TREVIRKE UTVENDIG – AREAL</span>
<span class="t" style="left:507.30px;top:489.00px;font-size:9.6px;transform:scaleX(0.8735);">TB6.424146</span>
<span class="t" style="left:574.50px;top:489.00px;font-size:9.6px;transform:scaleX(0.9414);">9l</span>
<span class="t" style="left:645.40px;top:489.00px;font-size:9.6px;transform:scaleX(0.9088);">330</span>
<span class="t" style="left:724.60px;top:489.00px;font-size:9.6px;transform:scaleX(0.9781);">m<sup>2</sup></span>
<span class="t" style="left:781.20px;top:489.00px;font-size:9.6px;transform:scaleX(0.9151);">110.36</span>
<span class="t" style="left:859.40px;top:489.00px;font-size:9.6px;transform:scaleX(0.9042);">36418.800000000003</span>
<div class="b" style="left:9px;top:500.76px;width:960px;height:14.0px;background:#f0f0f0;"></div>
<div class="b" style="left:12.0px;top:503.42999999999995px;width:10.7px;height:10.0px;background:#fff;border:1px solid #9b9b9b;border-radius:1.5px"></div>
<span class="t" style="left:26.60px;top:504.00px;font-size:9.6px;transform:scaleX(0.9092);">22</span>
<span class="t" style="left:44.00px;top:504.00px;font-size:9.6px;transform:scaleX(0.8790);">Beskrivelse</span>
<span class="t" style="left:138.30px;top:504.00px;font-size:9.6px;transform:scaleX(0.9194);">Sum 21. Malerarbeid</span>
<span class="t" style="left:859.40px;top:504.00px;font-size:9.6px;transform:scaleX(0.9042);">36418.800000000003</span>
<div class="b" style="left:12.0px;top:518.36px;width:10.7px;height:10.0px;background:#fff;border:1px solid #9b9b9b;border-radius:1.5px"></div>
<span class="t" style="left:26.60px;top:519.00px;font-size:9.6px;transform:scaleX(0.9092);">23</span>
<span class="t" style="left:44.00px;top:519.00px;font-size:9.6px;transform:scaleX(0.8790);">Beskrivelse</span>
<span class="t" style="left:138.30px;top:519.00px;font-size:9.6px;transform:scaleX(0.8784);">Sum (eksl. mva.):</span>
<span class="t" style="left:574.50px;top:519.00px;font-size:9.6px;transform:scaleX(0.8987);">579981.87</span>
<div class="b" style="left:9px;top:533.1px;width:960.5px;height:10.8px;background:#f0f0f0;"></div>
<svg class="b" style="left:13px;top:535.5px" width="6" height="8" viewBox="0 0 6 8"><path d="M4.5 0.8L1.5 4L4.5 7.2" stroke="#d4d4d4" stroke-width="1.2" fill="none"/></svg>
<svg class="b" style="left:961px;top:535.4px" width="6" height="8" viewBox="0 0 6 8"><path d="M1.5 0.8L4.5 4L1.5 7.2" stroke="#d4d4d4" stroke-width="1.2" fill="none"/></svg>
<div class="b" style="left:224.0px;top:163.2px;width:634.0px;height:28.5px;border:2px solid #f7b588;border-right:1px solid #ef9552;border-radius:2px"></div>
<div class="b" style="left:6.0px;top:217.0px;width:128.2px;height:285.0px;border:1px solid #f5a469;border-top:2px solid #f7b080;border-radius:1px"></div>
<div class="b" style="left:133.5px;top:303.5px;width:40px;height:35.5px;background:#f57f22;"></div>
<span class="t" style="left:144.90px;top:317.00px;font-size:18.4px;transform:scaleX(1.0949);font-weight:bold;-webkit-text-stroke:0;color:#fff;">3.</span>
<span class="t" style="left:8.00px;top:549.00px;font-size:9.6px;transform:scaleX(0.9488);color:#f39a4d;">Velg ingen</span>
<span class="t" style="left:54.30px;top:549.00px;font-size:9.6px;transform:scaleX(0.9321);color:#f39a4d;">Velg alle</span>
<div class="b" style="left:1px;top:566px;width:978px;height:26px;background:#33444d;"></div>
<svg class="b" style="left:862px;top:572px" width="17" height="14" viewBox="0 0 17 14"><path d="M2.9 7.2L6.3 10.4L13.9 3.6" stroke="#fff" stroke-width="2.0" fill="none"/></svg>
<span class="t" style="left:880.40px;top:575.00px;font-size:9.8px;transform:scaleX(0.8971);color:#fff;"><u>O</u>K</span>
<svg class="b" style="left:923.9px;top:572.2px" width="14" height="14" viewBox="0 0 14 14"><circle cx="7" cy="7" r="6.5" fill="#fff"/><path d="M4.1 4.1L9.9 9.9M9.9 4.1L4.1 9.9" stroke="#33444d" stroke-width="2.6" fill="none"/></svg>
<span class="t" style="left:941.10px;top:575.00px;font-size:9.8px;transform:scaleX(0.9422);color:#fff;"><u>A</u>vbryt</span>
<div id="win"></div>
</body></html>
